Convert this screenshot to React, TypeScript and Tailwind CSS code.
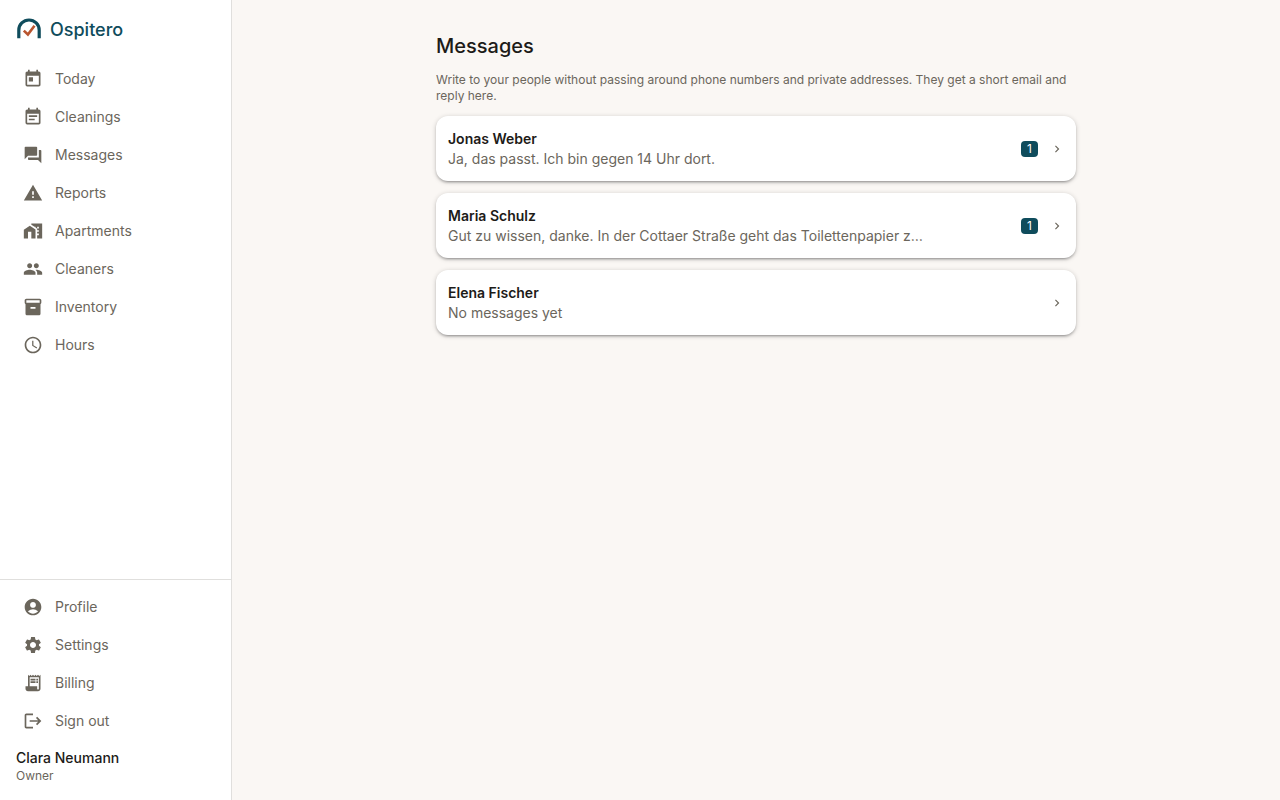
import React from 'react';
import {
  MdAccountCircle,
  MdChevronRight,
  MdEventNote,
  MdForum,
  MdInventory2,
  MdLogout,
  MdPeople,
  MdReceiptLong,
  MdSchedule,
  MdSettings,
  MdToday,
  MdWarning
} from 'react-icons/md';

interface NavItem {
  label: string;
  href: string;
  icon: React.ComponentType<{ className?: string }>;
}

interface Thread {
  id: string;
  name: string;
  preview: string;
  unread: number;
}

// House in front of an apartment block
function ApartmentsIcon({ className }: { className?: string }) {
  return (
    <svg viewBox="0 0 24 24" className={className} fill="currentColor" aria-hidden="true">
      <path d="M8.17 5.7L1 10.48V21h5v-8h4v8h5V10.25z" />
      <path d="M10 3v1.51l2 1.33L13.73 7H15v.85l2 1.34V11h2v2h-2v2h2v2h-2v4h6V3H10zm9 6h-2V7h2v2z" />
    </svg>
  );
}

const mainNav: NavItem[] = [
  { label: 'Today', href: '#today', icon: MdToday },
  { label: 'Cleanings', href: '#cleanings', icon: MdEventNote },
  { label: 'Messages', href: '#messages', icon: MdForum },
  { label: 'Reports', href: '#reports', icon: MdWarning },
  { label: 'Apartments', href: '#apartments', icon: ApartmentsIcon },
  { label: 'Cleaners', href: '#cleaners', icon: MdPeople },
  { label: 'Inventory', href: '#inventory', icon: MdInventory2 },
  { label: 'Hours', href: '#hours', icon: MdSchedule }
];

const accountNav: NavItem[] = [
  { label: 'Profile', href: '#profile', icon: MdAccountCircle },
  { label: 'Settings', href: '#settings', icon: MdSettings },
  { label: 'Billing', href: '#billing', icon: MdReceiptLong }
];

const threads: Thread[] = [
  { id: 'jonas', name: 'Jonas Weber', preview: 'Ja, das passt. Ich bin gegen 14 Uhr dort.', unread: 1 },
  {
    id: 'maria',
    name: 'Maria Schulz',
    preview: 'Gut zu wissen, danke. In der Cottaer Straße geht das Toilettenpapier z…',
    unread: 1
  },
  { id: 'elena', name: 'Elena Fischer', preview: 'No messages yet', unread: 0 }
];

function Logo() {
  return (
    <svg viewBox="0 0 26 26" className="w-[26px] h-[26px]" fill="none" aria-hidden="true">
      <path d="M2.8 21.3V13.2a10.2 10.2 0 0 1 20.4 0v8.1" stroke="#0f4c5c" strokeWidth="3.2" />
      <path d="M7.8 13.6l4.1 3.9 6.6-8.8" stroke="#b9552f" strokeWidth="2.6" />
    </svg>
  );
}

function NavLink({ label, href, icon: Icon }: NavItem) {
  return (
    <a href={href} className="flex items-center gap-3 h-[38px] px-[7px] rounded-lg hover:bg-black/5">
      <Icon className="w-5 h-5 shrink-0" />
      <span>{label}</span>
    </a>
  );
}

function Sidebar() {
  return (
    <aside className="w-[232px] shrink-0 flex flex-col bg-white border-r border-[#e0dfdd] text-sm text-[#6b665c]">
      {/* Brand */}
      <a href="#home" className="flex items-center gap-2 h-[60px] px-4 text-lg font-medium text-[#0f4c5c]">
        <Logo />
        <span>Ospitero</span>
      </a>

      <nav aria-label="Main" className="flex-1 px-4">
        {mainNav.map((item) => (
          <NavLink key={item.label} {...item} />
        ))}
      </nav>

      {/* Account */}
      <div className="border-t border-[#e0dfdd] pt-2 pb-4 px-4">
        <nav aria-label="Account">
          {accountNav.map((item) => (
            <NavLink key={item.label} {...item} />
          ))}
          <button
            type="button"
            className="w-full flex items-center gap-3 h-[38px] px-[7px] rounded-lg hover:bg-black/5 cursor-pointer"
          >
            <MdLogout className="w-5 h-5 shrink-0" />
            <span>Sign out</span>
          </button>
        </nav>
        <p className="mt-2 leading-5 font-medium text-[#1d1b18]">Clara Neumann</p>
        <p className="text-xs">Owner</p>
      </div>
    </aside>
  );
}

function ThreadCard({ name, preview, unread, id }: Thread) {
  return (
    <a
      href={`#messages/${id}`}
      className="flex items-center gap-3 min-h-[65px] px-3 py-3 rounded-xl bg-white text-sm shadow-[0_1px_5px_rgba(0,0,0,0.2),0_2px_2px_rgba(0,0,0,0.14),0_3px_1px_-2px_rgba(0,0,0,0.12)]"
    >
      <div className="flex-1 min-w-0">
        <h2 className="leading-5 font-semibold text-[#1d1b18]">{name}</h2>
        <p className="leading-5 text-[#6b665c] truncate">{preview}</p>
      </div>
      {unread > 0 && (
        <span className="min-w-[17px] h-4 px-1 rounded bg-[#0f4c5c] text-xs text-white text-center">{unread}</span>
      )}
      <MdChevronRight className="w-[14px] h-[14px] shrink-0 text-[#6b665c]" />
    </a>
  );
}

export default function App() {
  return (
    <div className="min-h-screen flex bg-[#faf7f4] font-['Inter',sans-serif]">
      <Sidebar />

      <main className="flex-1 min-w-0 px-4 py-8">
        <div className="max-w-[640px] mx-auto flex flex-col gap-3">
          <h1 className="text-xl leading-7 font-medium text-[#1d1b18]">Messages</h1>
          <p className="text-xs text-[#6b665c]">
            Write to your people without passing around phone numbers and private addresses. They get a short email and
            reply here.
          </p>
          {threads.map((thread) => (
            <ThreadCard key={thread.id} {...thread} />
          ))}
        </div>
      </main>
    </div>
  );
}
